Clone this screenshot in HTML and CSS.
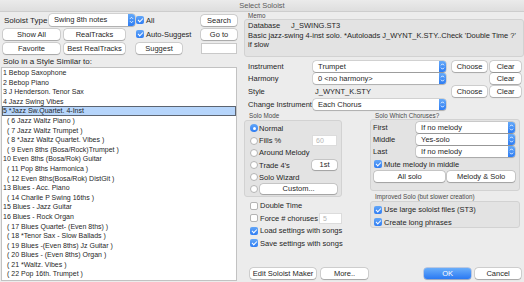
FILE: index.html
```html
<!DOCTYPE html>
<html lang="en">
<head>
  <meta charset="UTF-8">
  <title>Select Soloist</title>
  <link rel="stylesheet" href="styles.css">
</head>
<body>

<div class="window">
  <div class="titlebar">Select Soloist</div>

  <div class="content">
    <!-- left: soloist list -->
    <div class="left">
      <div class="controls">
        <div class="type-cell">
          <span class="type-label">Soloist Type</span>
          <div class="select sel-type">Swing 8th notes<span class="stepper"><svg viewBox="0 0 7 11"><path d="M2 4.3 3.5 2.8 5 4.3M2 6.7 3.5 8.2 5 6.7"/></svg></span></div>
        </div>
        <label class="chk"><span class="box on"></span>All</label>
        <button class="btn w36">Search</button>

        <button class="btn w57">Show All</button>
        <button class="btn w61">RealTracks</button>
        <label class="chk"><span class="box on"></span>Auto-Suggest</label>
        <button class="btn w36">Go to</button>

        <button class="btn w57">Favorite</button>
        <button class="btn w61">Best RealTracks</button>
        <button class="btn w46">Suggest</button>
        <div class="field w36"></div>
      </div>

      <div class="list-label">Solo in a Style Similar to:</div>
      <ul class="list">
        <li>1 Bebop Saxophone</li>
        <li>2 Bebop Piano</li>
        <li>3 J Henderson. Tenor Sax</li>
        <li>4 Jazz Swing Vibes</li>
        <li class="selected">5 *Jazz Sw.Quartet. 4-Inst</li>
        <li class="sub">( 6 Jazz Waltz Piano )</li>
        <li class="sub">( 7 Jazz Waltz Trumpet )</li>
        <li class="sub">( 8 *Jazz Waltz Quartet. Vibes )</li>
        <li class="sub">( 9 Even 8ths (Bosa/Rock)Trumpet )</li>
        <li>10 Even 8ths (Bosa/Rok) Guitar</li>
        <li class="sub">( 11 Pop 8ths Harmonica )</li>
        <li class="sub">( 12 Even 8ths(Bosa/Rok) DistGit )</li>
        <li>13 Blues - Acc. Piano</li>
        <li class="sub">( 14 Charlie P Swing 16ths )</li>
        <li>15 Blues - Jazz Guitar</li>
        <li>16 Blues - Rock Organ</li>
        <li class="sub">( 17 Blues Quartet- (Even 8ths) )</li>
        <li class="sub">( 18 *Tenor Sax - Slow Ballads )</li>
        <li class="sub">( 19 Blues -(Even 8ths) Jz Guitar )</li>
        <li class="sub">( 20 Blues - (Even 8ths) Organ )</li>
        <li class="sub">( 21 *Waltz. Vibes )</li>
        <li class="sub">( 22 Pop 16th. Trumpet )</li>
      </ul>
    </div>

    <!-- right: settings -->
    <div class="right">
      <div class="group-label">Memo</div>
      <div class="memo">
        <div><span class="memo-key">Database</span>J_SWING.ST3</div>
        <div>Basic jazz-swing 4-inst solo. *Autoloads J_WYNT_K.STY..Check 'Double Time ?'</div>
        <div>if slow</div>
      </div>

      <div class="fields">
        <span>Instrument</span>
        <div class="select w133">Trumpet<span class="stepper"><svg viewBox="0 0 7 11"><path d="M2 4.3 3.5 2.8 5 4.3M2 6.7 3.5 8.2 5 6.7"/></svg></span></div>
        <button class="btn w35">Choose</button>
        <button class="btn w31">Clear</button>

        <span>Harmony</span>
        <div class="select w133">0 &lt;no harmony&gt;<span class="stepper"><svg viewBox="0 0 7 11"><path d="M2 4.3 3.5 2.8 5 4.3M2 6.7 3.5 8.2 5 6.7"/></svg></span></div>
        <span></span>
        <button class="btn w31">Clear</button>

        <span>Style</span>
        <span class="style-value">J_WYNT_K.STY</span>
        <button class="btn w35">Choose</button>
        <button class="btn w31">Clear</button>

        <span>Change Instrument</span>
        <div class="select w133">Each Chorus<span class="stepper"><svg viewBox="0 0 7 11"><path d="M2 4.3 3.5 2.8 5 4.3M2 6.7 3.5 8.2 5 6.7"/></svg></span></div>
      </div>

      <div class="middle">
        <div class="col-mode">
          <div class="group-label">Solo Mode</div>
          <div class="group mode-box">
            <div class="opt"><span class="radio on"></span>Normal</div>
            <div class="opt"><span class="radio"></span>Fills %<div class="field small disabled">60</div></div>
            <div class="opt"><span class="radio"></span>Around Melody</div>
            <div class="opt"><span class="radio"></span>Trade 4's<button class="btn small">1st</button></div>
            <div class="opt"><span class="radio"></span>Solo Wizard</div>
            <div class="opt"><span class="radio"></span><button class="btn custom">Custom...</button></div>
          </div>

          <div class="checks">
            <label class="chk"><span class="box"></span>Double Time</label>
            <label class="chk"><span class="box"></span><span class="force-label">Force # choruses</span><span class="field tiny disabled">5</span></label>
            <label class="chk"><span class="box on"></span>Load settings with songs</label>
            <label class="chk"><span class="box on"></span>Save settings with songs</label>
          </div>
        </div>

        <div class="col-chorus">
          <div class="group-label">Solo Which Choruses?</div>
          <div class="group chorus-box">
            <div class="chorus-row"><span class="chorus-key">First</span><div class="select w99">If no melody<span class="stepper"><svg viewBox="0 0 7 11"><path d="M2 4.3 3.5 2.8 5 4.3M2 6.7 3.5 8.2 5 6.7"/></svg></span></div></div>
            <div class="chorus-row"><span class="chorus-key">Middle</span><div class="select w99">Yes-solo<span class="stepper"><svg viewBox="0 0 7 11"><path d="M2 4.3 3.5 2.8 5 4.3M2 6.7 3.5 8.2 5 6.7"/></svg></span></div></div>
            <div class="chorus-row"><span class="chorus-key">Last</span><div class="select w99">If no melody<span class="stepper"><svg viewBox="0 0 7 11"><path d="M2 4.3 3.5 2.8 5 4.3M2 6.7 3.5 8.2 5 6.7"/></svg></span></div></div>
            <label class="chk chorus-check"><span class="box on"></span>Mute melody in middle</label>
            <div class="chorus-buttons">
              <button class="btn w71">All solo</button>
              <button class="btn w68">Melody &amp; Solo</button>
            </div>
          </div>

          <div class="group-label improved-label">Improved Solo (but slower creation)</div>
          <div class="group improved-box">
            <label class="chk"><span class="box on"></span>Use large soloist files (ST3)</label>
            <label class="chk"><span class="box on"></span>Create long phrases</label>
          </div>
        </div>
      </div>

      <div class="bottom">
        <button class="btn w66">Edit Soloist Maker</button>
        <button class="btn w47 more">More..</button>
        <button class="btn w47 ok">OK</button>
        <button class="btn w46 cancel">Cancel</button>
      </div>
    </div>
  </div>
</div>

</body>
</html>
```

FILE: styles.css
```css
:root {
  --bg: #ececec;
  --group-bg: #e3e3e3;
  --group-border: #d2d2d2;
  --text: #1f1f1f;
  --label: #4a4a4a;
  --blue: #3a8bf5;
}

body {
  margin: 0;
  background: var(--bg);
  font-family: 'Liberation Sans', Arial, sans-serif;
  color: var(--text);
}

.window {
  width: 524px;
  height: 282px;
  overflow: hidden;
  background: var(--bg);
}

.titlebar {
  height: 11px;
  line-height: 11px;
  text-align: center;
  font-size: 7.5px;
  color: #5c5c5c;
  background: linear-gradient(#ebebeb, #dedede);
  border-bottom: 1px solid #cdcdcd;
}

.content {
  display: flex;
  height: 270px;
}

/* ---------- buttons / fields ---------- */

.btn {
  height: 11px;
  padding: 0;
  border: none;
  border-radius: 3px;
  background: #fff;
  box-shadow: 0 0 0 0.5px rgba(0,0,0,0.22), 0 0.5px 1px rgba(0,0,0,0.2);
  font-family: inherit;
  font-size: 7.5px;
  color: var(--text);
  line-height: 11px;
  text-align: center;
  align-self: center;
}

.w31 { width: 31px; }
.w35 { width: 35px; }
.w36 { width: 36px; }
.w46 { width: 46px; }
.w47 { width: 47px; }
.w57 { width: 57px; }
.w61 { width: 61px; }
.w66 { width: 66px; }
.w68 { width: 68px; }
.w71 { width: 71px; }
.w99 { width: 99px; }
.w133 { width: 133px; }

.select {
  position: relative;
  height: 11px;
  line-height: 11px;
  padding-left: 5px;
  box-sizing: border-box;
  border-radius: 3px;
  background: #fff;
  box-shadow: 0 0 0 0.5px rgba(0,0,0,0.2), 0 0.5px 1px rgba(0,0,0,0.18);
  font-size: 7.5px;
  align-self: center;
}

.stepper {
  position: absolute;
  right: 0;
  top: 0;
  width: 7px;
  height: 11px;
  border-radius: 0 3px 3px 0;
  background: linear-gradient(#65a9f8, #2d7cf3);
}

.stepper svg {
  display: block;
  width: 7px;
  height: 11px;
}

.stepper path {
  fill: none;
  stroke: #fff;
  stroke-width: 0.9;
}

.field {
  height: 11px;
  box-sizing: border-box;
  background: #fff;
  border: 1px solid #c9c9c9;
  font-size: 7px;
  line-height: 9px;
  padding-left: 3px;
  align-self: center;
}

.field.disabled {
  color: #b5b5b5;
  border-color: #dcdcdc;
}

.chk {
  display: flex;
  align-items: center;
  font-size: 7.5px;
  white-space: nowrap;
}

.box {
  position: relative;
  width: 8px;
  height: 8px;
  box-sizing: border-box;
  margin-right: 2px;
  border-radius: 2px;
  background: #fff;
  border: 1px solid #b4b4b4;
  flex: none;
}

.box.on {
  border: none;
  background: linear-gradient(#62a6f8, #2f7df3);
}

.box.on::after {
  content: "";
  position: absolute;
  left: 2.7px;
  top: 0.9px;
  width: 1.8px;
  height: 4px;
  border: solid #fff;
  border-width: 0 1.2px 1.2px 0;
  transform: rotate(45deg);
}

.radio {
  position: relative;
  width: 8px;
  height: 8px;
  box-sizing: border-box;
  margin-right: 1px;
  border-radius: 50%;
  background: #fff;
  border: 1px solid #b4b4b4;
  flex: none;
}

.radio.on {
  border: none;
  background: linear-gradient(#62a6f8, #2f7df3);
}

.radio.on::after {
  content: "";
  position: absolute;
  left: 2.5px;
  top: 2.5px;
  width: 3px;
  height: 3px;
  border-radius: 50%;
  background: #fff;
}

/* ---------- left side ---------- */

.left {
  width: 237px;
  margin-left: 1px;
}

.controls {
  display: grid;
  grid-template-columns: 61px 72px 65px 36px;
  grid-auto-rows: 12px;
  row-gap: 2px;
  margin: 2px 0 0 2px;
}

.type-cell {
  grid-column: span 2;
  display: flex;
  align-items: center;
  font-size: 8px;
}

.type-label {
  width: 45px;
  padding-left: 1px;
}

.sel-type {
  width: 86px;
  height: 12px;
  line-height: 12px;
}

.sel-type .stepper {
  height: 12px;
}

.sel-type .stepper svg {
  height: 12px;
}

.list-label {
  margin-top: 3px;
  height: 10px;
  line-height: 10px;
  padding-left: 2px;
  font-size: 8px;
}

.list {
  list-style: none;
  margin: 0;
  padding: 0;
  height: 214px;
  box-sizing: border-box;
  background: #fff;
  border: 1px solid #c2c2c2;
  font-size: 7px;
}

.list li {
  height: 9.6px;
  line-height: 9.6px;
  padding-left: 1px;
  white-space: nowrap;
}

.list li.sub {
  padding-left: 5px;
}

.list li.selected {
  background: #b6d5fb;
  box-shadow: inset 0 0 0 1px #5c6470;
}

/* ---------- right side ---------- */

.right {
  width: 282px;
  margin-left: 6px;
  display: flex;
  flex-direction: column;
}

.group-label {
  height: 7px;
  line-height: 7px;
  padding-left: 5px;
  font-size: 6.3px;
  color: var(--label);
}

.group {
  background: var(--group-bg);
  border: 1px solid var(--group-border);
  border-radius: 3px;
}

.memo {
  height: 38px;
  box-sizing: border-box;
  margin-left: 1px;
  padding: 1px 3px;
  background: var(--group-bg);
  border: 1px solid var(--group-border);
  border-radius: 3px;
  font-size: 7.5px;
  line-height: 9.5px;
  white-space: nowrap;
}

.memo-key {
  display: inline-block;
  width: 43px;
}

.fields {
  display: grid;
  grid-template-columns: 65px 139px 38px 31px;
  grid-auto-rows: 12px;
  row-gap: 0.8px;
  margin-top: 3px;
  padding-left: 5px;
  font-size: 7.5px;
  align-items: center;
  white-space: nowrap;
}

.style-value {
  padding-left: 2px;
}

.middle {
  display: flex;
  margin-top: 2px;
}

.col-mode {
  width: 98px;
  margin-left: 1px;
}

.mode-box {
  margin-top: 1px;
  height: 77px;
  box-sizing: border-box;
  padding: 1px 4px 1px 5px;
}

.opt {
  display: flex;
  align-items: center;
  height: 12.2px;
  font-size: 7.5px;
  white-space: nowrap;
}

.field.small,
.btn.small {
  width: 25px;
  margin-left: auto;
}

.btn.small {
  height: 10px;
  line-height: 10px;
}

.btn.custom {
  flex: 1;
  height: 10px;
  line-height: 10px;
  margin-left: 1px;
}

.checks {
  margin-top: 2px;
  padding-left: 6px;
}

.checks .chk {
  height: 12.6px;
}

.force-label {
  width: 69px;
}

.field.tiny {
  width: 23px;
  flex: none;
}

.col-chorus {
  width: 150px;
  margin-left: 28px;
}

.chorus-box {
  margin-top: 0;
  height: 72px;
  box-sizing: border-box;
  padding: 1px 3px 0 2px;
}

.chorus-row {
  display: flex;
  align-items: center;
  height: 12.2px;
  font-size: 7.5px;
}

.chorus-key {
  width: 43px;
}

.chorus-check {
  height: 12.2px;
  padding-left: 1px;
}

.chorus-buttons {
  display: flex;
  gap: 2px;
  height: 12.2px;
  padding-left: 1px;
}

.improved-label {
  margin-top: 2px;
}

.improved-box {
  margin-top: 1px;
  height: 27px;
  box-sizing: border-box;
  padding: 1px 0 0 3px;
}

.improved-box .chk {
  height: 12.6px;
}

.bottom {
  display: flex;
  margin-top: auto;
  margin-bottom: 3px;
  height: 12px;
  padding-left: 7px;
}

.bottom .btn {
  height: 11px;
}

.more { margin-left: 5px; }
.ok {
  margin-left: 56px;
  color: #fff;
  background: linear-gradient(#6aaefa, #2a79f3);
  box-shadow: 0 0 0 0.5px rgba(20,80,200,0.4), 0 0.5px 1px rgba(0,0,0,0.2);
}
.cancel { margin-left: 4px; }
```
